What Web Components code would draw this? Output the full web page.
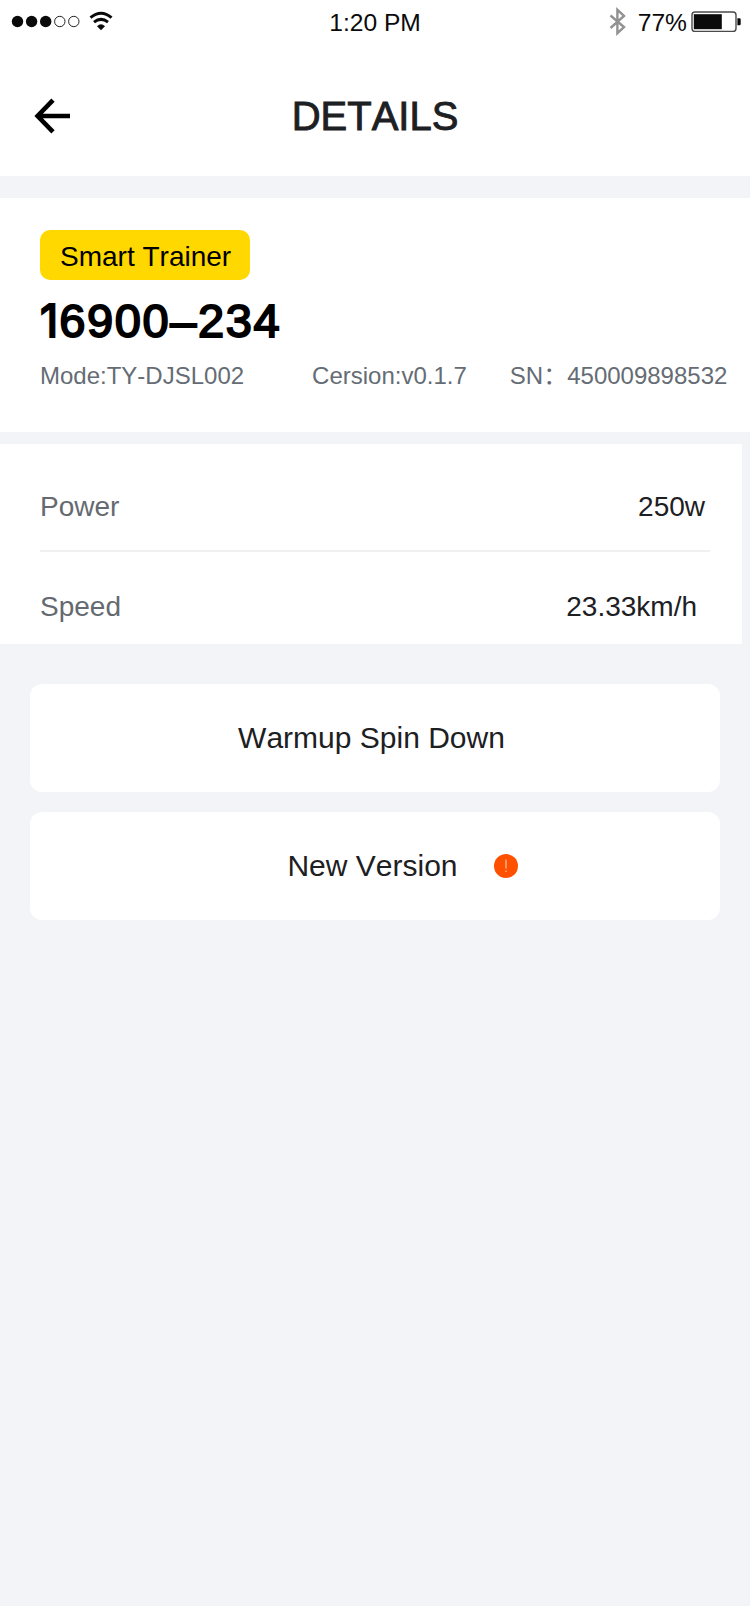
<!DOCTYPE html>
<html lang="en">
<head>
<meta charset="utf-8">
<title>Details</title>
<style>
  body {
    margin: 0;
    background: #f3f4f8;
    font-family: "Liberation Sans", Arial, "Noto Sans CJK SC", sans-serif;
    font-kerning: none;
    color: #1d2023;
  }
</style>
</head>
<body>
<device-page>
  <status-bar slot="top" time="1:20 PM" battery="77"></status-bar>
  <nav-header slot="top">DETAILS</nav-header>
  <device-card tag="Smart Trainer" name="16900–234">
    <span>Mode:TY-DJSL002</span>
    <span style="margin-left: 68px">Cersion:v0.1.7</span>
    <span style="margin-left: 43px">SN：450009898532</span>
  </device-card>
  <data-list>
    <data-row label="Power" style="--inset: 5px">250w</data-row>
    <data-row label="Speed" style="--inset: 13px">23.33km/h</data-row>
  </data-list>
  <action-button style="--shift: -7px">Warmup Spin Down</action-button>
  <action-button alert style="--shift: 55px">New Version</action-button>
</device-page>

<script>
function define(name, html, setup) {
  const template = document.createElement("template");
  template.innerHTML = html;

  customElements.define(name, class extends HTMLElement {
    constructor() {
      super();
      this.attachShadow({mode: "open"});
      this.shadowRoot.appendChild(template.content.cloneNode(true));
    }

    connectedCallback() {
      if (setup)
        setup(this, this.shadowRoot);
    }
  });
}

define("device-page", `
  <style>
    :host {
      display: flex;
      flex-direction: column;
      width: 750px;
      height: 1606px;
      overflow: hidden;
      background: #f3f4f8;
    }
    header {
      height: 176px;
      margin-bottom: 22px;
      background: #fff;
    }
  </style>
  <header><slot name="top"></slot></header>
  <slot></slot>
`);

define("status-bar", `
  <style>
    :host {
      display: grid;
      grid-template-columns: 1fr auto 1fr;
      align-items: center;
      height: 44px;
      box-sizing: border-box;
      padding: 0 9px;
      font-size: 24.6px;
      color: #0a0a0a;
    }
    svg {
      display: block;
    }
    .signal {
      margin-left: 2px;
    }
    #time, .level {
      padding-top: 2px;
    }
    .right {
      display: flex;
      align-items: center;
      justify-content: flex-end;
    }
    .level {
      margin-left: 11px;
      margin-right: 3px;
    }
  </style>
  <svg class="signal" width="104" height="28" viewBox="0 0 104 28">
    <g fill="#0a0a0a">
      <circle cx="6.5" cy="13.5" r="5.7"/>
      <circle cx="20.6" cy="13.5" r="5.7"/>
      <circle cx="34.7" cy="13.5" r="5.7"/>
    </g>
    <g fill="none" stroke="#222" stroke-width="1">
      <circle cx="48.8" cy="13.5" r="5.2"/>
      <circle cx="62.8" cy="13.5" r="5.2"/>
    </g>
    <g fill="none" stroke="#0a0a0a" stroke-width="3">
      <path d="M79.5 9.6Q90 0.9 100.5 9.6"/>
      <path d="M83 14.2Q90 8.6 97 14.2"/>
    </g>
    <path d="M86 18.2Q90 14.4 94 18.2L90 22.3z" fill="#0a0a0a"/>
  </svg>
  <span id="time"></span>
  <div class="right">
    <svg width="18" height="30" viewBox="0 0 18 30">
      <path d="M1.5 8.5L15 20L8.4 26.2V2.8L15 9L1.5 21" fill="none" stroke="#929292" stroke-width="2.4"/>
    </svg>
    <span class="level"></span>
    <svg width="51" height="24" viewBox="0 0 51 24">
      <rect x="2" y="2" width="44" height="19.4" rx="3" fill="#fff" stroke="#4a4a4a" stroke-width="1.4"/>
      <rect x="3.8" y="4.2" width="28" height="15" fill="#0a0a0a"/>
      <path d="M47.4 8.3h2q1.3 0 1.3 1.3v4.4q0 1.3-1.3 1.3h-2z" fill="#0a0a0a"/>
    </svg>
  </div>
`, (host, root) => {
  root.querySelector("#time").textContent = host.getAttribute("time");
  root.querySelector(".level").textContent = host.getAttribute("battery") + "%";
});

define("nav-header", `
  <style>
    :host {
      display: grid;
      grid-template-columns: 1fr auto 1fr;
      align-items: center;
      height: 144px;
      padding: 0 34px;
    }
    svg {
      display: block;
    }
    h1 {
      margin: 0;
      font-size: 40px;
      font-weight: 400;
      -webkit-text-stroke: .9px #1d2023;
    }
  </style>
  <svg width="38" height="36" viewBox="0 0 38 36">
    <path d="M36 18H4M19 2.2L3.6 18L19 33.8" fill="none" stroke="#000" stroke-width="4.6"/>
  </svg>
  <h1><slot></slot></h1>
`);

define("device-card", `
  <style>
    :host {
      display: block;
      height: 234px;
      box-sizing: border-box;
      padding: 32px 0 0 40px;
      margin-bottom: 12px;
      background: #fff;
    }
    .tag {
      display: flex;
      align-items: center;
      width: 210px;
      height: 50px;
      box-sizing: border-box;
      padding: 3px 0 0 20px;
      border-radius: 10px;
      background: #ffd800;
      color: #000;
      font-size: 28px;
    }
    h2 {
      height: 56px;
      margin: 13px 0 0;
      line-height: 56px;
      font-size: 47px;
      font-weight: 400;
      letter-spacing: 1.6px;
      -webkit-text-stroke: 1.9px #000;
      color: #000;
      white-space: nowrap;
    }
    /* the leading 1 has no foot and sits tight */
    h2::first-letter {
      font-family: Inter, "Liberation Sans", sans-serif;
      font-size: 45px;
      font-weight: 400;
      letter-spacing: 1px;
    }
    .info {
      display: flex;
      margin-top: 13px;
      line-height: 28px;
      font-size: 24px;
      color: #656c74;
      white-space: nowrap;
    }
  </style>
  <div class="tag"></div>
  <h2></h2>
  <div class="info"><slot></slot></div>
`, (host, root) => {
  root.querySelector(".tag").textContent = host.getAttribute("tag");
  root.querySelector("h2").textContent = host.getAttribute("name");
});

define("data-list", `
  <style>
    :host {
      display: block;
      width: 742px;
      height: 200px;
      box-sizing: border-box;
      padding-top: 8px;
      margin-bottom: 40px;
      background: #fff;
    }
  </style>
  <slot></slot>
`);

define("data-row", `
  <style>
    :host {
      display: flex;
      align-items: flex-start;
      justify-content: space-between;
      height: 100px;
      box-sizing: border-box;
      margin-left: 40px;
      margin-right: 32px;
      padding-top: 39px;
      padding-right: var(--inset);
      font-size: 28px;
      border-bottom: 2px solid #eff0f1;
    }
    :host(:last-child) {
      height: 92px;
      border: 0;
    }
    .label {
      color: #656a71;
    }
  </style>
  <span class="label"></span>
  <span><slot></slot></span>
`, (host, root) => {
  root.querySelector(".label").textContent = host.getAttribute("label");
});

define("action-button", `
  <style>
    :host {
      display: block;
      margin: 0 30px 20px;
    }
    button {
      display: flex;
      align-items: center;
      justify-content: center;
      width: 100%;
      height: 108px;
      padding: 0;
      border: 0;
      border-radius: 12px;
      background: #fff;
      font: inherit;
      font-kerning: none;
      font-size: 30px;
      color: #1d2023;
    }
    svg {
      display: none;
      margin-left: 36px;
    }
    :host([alert]) svg {
      display: block;
    }
    .text {
      margin-left: var(--shift);
    }
  </style>
  <button>
    <span class="text"><slot></slot></span>
    <svg width="24" height="24" viewBox="0 0 24 24">
      <circle cx="12" cy="12" r="12" fill="#ff5000"/>
      <path d="M12 5.5V14.5M12 16.5V18" stroke="#ffc9ab" stroke-width="1.2"/>
    </svg>
  </button>
`);
</script>
</body>
</html>
